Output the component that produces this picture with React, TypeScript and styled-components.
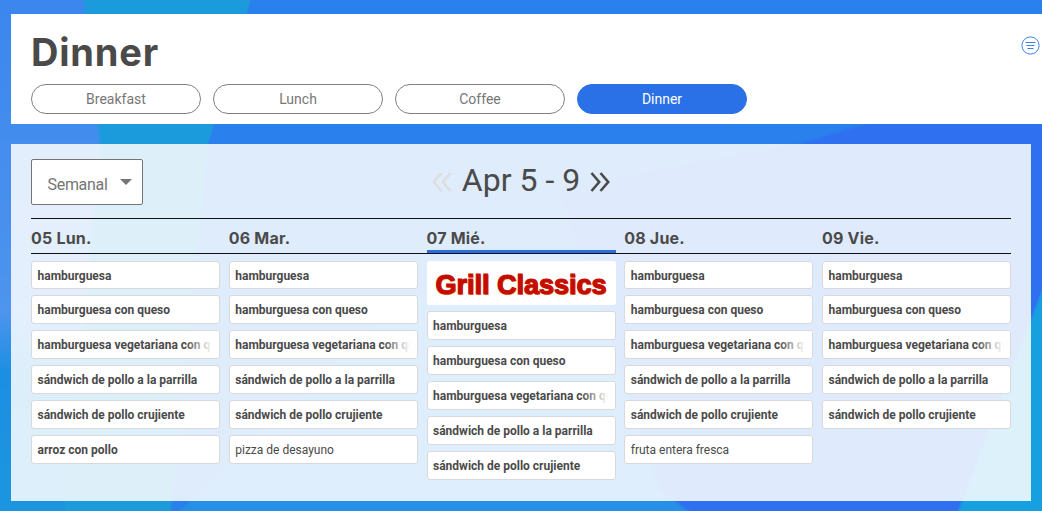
import React from 'react';
import styled, { createGlobalStyle } from 'styled-components';

const GlobalStyle = createGlobalStyle`
  html, body {
    margin: 0;
    padding: 0;
  }
  body {
    font-family: Roboto, "Liberation Sans", sans-serif;
    color: #4a4a4a;
  }
  * {
    box-sizing: border-box;
  }
`;

const Page = styled.div`
  position: relative;
  width: 1042px;
  height: 511px;
  overflow: hidden;
  padding: 14px 0 10px 11px;
  display: flex;
  flex-direction: column;
  gap: 20px;
  background: #2a80ec;
`;

const Backdrop = styled.svg`
  position: absolute;
  inset: 0;
  width: 1042px;
  height: 511px;
`;

const Header = styled.header`
  position: relative;
  height: 110px;
  background: #fff;
  padding: 17px 20px 0;
`;

const Title = styled.h1`
  margin: 0 0 10px;
  font-family: Inter, "Noto Sans", sans-serif;
  font-size: 38px;
  line-height: 43px;
  font-weight: 700;
  letter-spacing: 0.8px;
  color: #4a4a4a;
`;

const Tabs = styled.div`
  display: flex;
  gap: 12px;
`;

const Tab = styled.button<{ $active?: boolean }>`
  width: 170px;
  height: 30px;
  border-radius: 15px;
  border: 1px solid ${(p) => (p.$active ? '#2a70e6' : '#808080')};
  background: ${(p) => (p.$active ? '#2a70e6' : '#fff')};
  color: ${(p) => (p.$active ? '#fff' : '#777')};
  font-family: Roboto, sans-serif;
  font-size: 14px;
  padding: 0;
`;

const MenuIcon = styled.svg`
  position: absolute;
  top: 22px;
  right: 2px;
  width: 19px;
  height: 19px;
`;

const Panel = styled.main`
  position: relative;
  width: 1020px;
  height: 357px;
  background: rgba(255, 255, 255, 0.85);
  padding: 15px 20px 0;
`;

const Toolbar = styled.div`
  position: relative;
  height: 46px;
  display: flex;
  justify-content: center;
  align-items: center;
  margin-bottom: 13px;
`;

const Select = styled.div`
  position: absolute;
  left: 0;
  top: 0;
  width: 112px;
  height: 46px;
  background: #fff;
  border: 1px solid #757575;
  border-radius: 2px;
  padding: 15px 0 0 15.5px;
  font-size: 16px;
  letter-spacing: -0.3px;
  line-height: 20px;
  color: #757575;

  &::after {
    content: '';
    position: absolute;
    right: 10px;
    top: 19px;
    border-left: 6px solid transparent;
    border-right: 6px solid transparent;
    border-top: 6px solid #757575;
  }
`;

const WeekNav = styled.div`
  display: flex;
  align-items: center;
  gap: 10px;
`;

const WeekLabel = styled.span`
  margin-bottom: 4px;
  font-size: 32px;
  line-height: 42px;
  color: #4a4a4a;
`;

const Chevrons = styled.svg<{ $muted?: boolean }>`
  width: 20px;
  height: 20px;
  color: ${(p) => (p.$muted ? '#dcdee0' : '#4a4a4a')};
`;

const WeekHead = styled.div`
  display: grid;
  grid-template-columns: repeat(5, minmax(0, 1fr));
  column-gap: 8.75px;
  border-top: 1px solid #111;
  border-bottom: 1px solid #111;
`;

const DayName = styled.div<{ $today?: boolean }>`
  height: 34px;
  padding-top: 9px;
  font-family: Inter, "Noto Sans", sans-serif;
  font-size: 16px;
  line-height: 20px;
  font-weight: 700;
  letter-spacing: 0.2px;
  color: #4a4a4a;
  box-shadow: ${(p) => (p.$today ? 'inset 0 -3px 0 #2a6de0' : 'none')};
`;

const WeekBody = styled.div`
  display: grid;
  grid-template-columns: repeat(5, minmax(0, 1fr));
  column-gap: 8.75px;
`;

const DayList = styled.div`
  display: flex;
  flex-direction: column;
  gap: 6.4px;
  padding-top: 6.5px;
`;

const Logo = styled.div`
  height: 44px;
  background: #fff;
  border-radius: 2px;
  margin-bottom: 0.6px;
  padding-top: 6px;
  display: flex;
  align-items: center;
  justify-content: center;
  font-family: "Liberation Sans", sans-serif;
  font-size: 27px;
  font-weight: 700;
  color: #c40c00;
  -webkit-text-stroke: 1.2px #c40c00;
  text-shadow: 1px 1px 0 #f3a33c;
`;

const Item = styled.div<{ $plain?: boolean }>`
  height: 28.6px;
  background: #fff;
  border: 1px solid #d9d9d9;
  border-radius: 3px;
  padding: 0 5.5px;
  font-size: 12px;
  line-height: 28.6px;
  font-weight: ${(p) => (p.$plain ? 400 : 700)};
  color: #4a4a4a;
  white-space: nowrap;
  overflow: hidden;
  position: relative;

  &[data-long]::after {
    content: '';
    position: absolute;
    top: 0;
    right: 0;
    bottom: 0;
    width: 34px;
    background: linear-gradient(to right, rgba(255, 255, 255, 0), #fff 80%);
  }
`;

type Meal = { name: string; plain?: boolean };

const base: Meal[] = [
  { name: 'hamburguesa' },
  { name: 'hamburguesa con queso' },
  { name: 'hamburguesa vegetariana con queso' },
  { name: 'sándwich de pollo a la parrilla' },
  { name: 'sándwich de pollo crujiente' },
];

const days: { label: string; today?: boolean; meals: Meal[] }[] = [
  { label: '05 Lun.', meals: [...base, { name: 'arroz con pollo' }] },
  { label: '06 Mar.', meals: [...base, { name: 'pizza de desayuno', plain: true }] },
  { label: '07 Mié.', today: true, meals: base },
  { label: '08 Jue.', meals: [...base, { name: 'fruta entera fresca', plain: true }] },
  { label: '09 Vie.', meals: base },
];

const tabs = ['Breakfast', 'Lunch', 'Coffee', 'Dinner'];

function App() {
  return (
    <Page>
      <GlobalStyle />
      <Backdrop viewBox="0 0 1042 511" aria-hidden="true">
        <defs>
          <filter id="soft">
            <feGaussianBlur stdDeviation="1" />
          </filter>
          <linearGradient id="leftStrip" x1="0" y1="0" x2="0" y2="1">
            <stop offset="0" stopColor="#3a87ee" />
            <stop offset="0.6" stopColor="#4f94ee" />
            <stop offset="0.72" stopColor="#1c8fe2" />
            <stop offset="1" stopColor="#1b96e0" />
          </linearGradient>
        </defs>
        <g filter="url(#soft)">
          <polygon points="-5,-5 83,-5 100,144 67,520 -5,520" fill="url(#leftStrip)" />
          <polygon points="170,520 400,300 800,250 690,520" fill="#268fe8" />
          <polygon points="83,-5 252,-5 208,144 170,520 64,520 100,144" fill="#1f9bdc" />
          <polygon points="1050,70 866,124 800,144 560,190 660,490 700,520 960,520 1050,270" fill="#2e70f0" />
          <polygon points="1050,270 1050,520 955,520" fill="#19a0df" />
        </g>
      </Backdrop>
      <Header>
        <Title>Dinner</Title>
        <Tabs>
          {tabs.map((t) => (
            <Tab key={t} $active={t === 'Dinner'}>
              {t}
            </Tab>
          ))}
        </Tabs>
        <MenuIcon viewBox="0 0 19 19" fill="none" stroke="#3d7fe8">
          <circle cx="9.5" cy="9.5" r="8.6" strokeWidth="1" />
          <path d="M4.5 6.5h10M5.5 9.5h8M6.5 12.5h6" strokeWidth="1" />
        </MenuIcon>
      </Header>
      <Panel>
        <Toolbar>
          <Select>Semanal</Select>
          <WeekNav>
            <Chevrons $muted viewBox="0 0 20 20" fill="none" stroke="currentColor" strokeWidth="2.6">
              <path d="M9.5 1 1.8 10l7.7 9M18.5 1l-7.7 9 7.7 9" />
            </Chevrons>
            <WeekLabel>Apr 5 - 9</WeekLabel>
            <Chevrons viewBox="0 0 20 20" fill="none" stroke="currentColor" strokeWidth="2.6">
              <path d="M1.5 1l7.7 9-7.7 9M10.5 1l7.7 9-7.7 9" />
            </Chevrons>
          </WeekNav>
        </Toolbar>
        <WeekHead>
          {days.map((d) => (
            <DayName key={d.label} $today={d.today}>
              {d.label}
            </DayName>
          ))}
        </WeekHead>
        <WeekBody>
          {days.map((d) => (
            <DayList key={d.label}>
              {d.today && <Logo>Grill Classics</Logo>}
              {d.meals.map((m) => (
                <Item
                  key={m.name}
                  $plain={m.plain}
                  data-long={m.name.includes('vegetariana') ? true : undefined}
                >
                  {m.name}
                </Item>
              ))}
            </DayList>
          ))}
        </WeekBody>
      </Panel>
    </Page>
  );
}

export default App;
